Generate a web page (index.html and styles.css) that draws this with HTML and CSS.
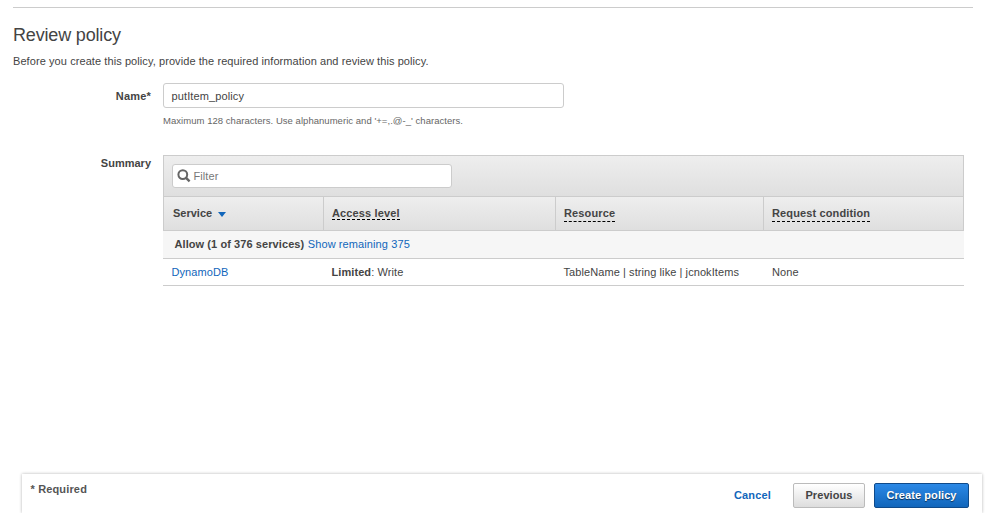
FILE: index.html
```html
<!DOCTYPE html>
<html lang="en">
<head>
<meta charset="utf-8">
<title>Review policy</title>
<link rel="stylesheet" href="styles.css">
</head>
<body>
<main class="page">
  <h1>Review policy</h1>
  <p class="intro">Before you create this policy, provide the required information and review this policy.</p>
  <div class="field name-field">
    <div class="label">Name*</div>
    <div>
      <div class="input">putItem_policy</div>
      <div class="hint">Maximum 128 characters. Use alphanumeric and '+=,.@-_' characters.</div>
    </div>
  </div>
  <div class="field summary-field">
    <div class="label">Summary</div>
    <section class="summary">
      <div class="toolbar">
        <div class="filter">
          <svg width="14" height="14" viewBox="0 0 14 14"><circle cx="5.8" cy="5.6" r="4.4" fill="none" stroke="#666" stroke-width="2"/><path d="M8.8 8.6L12.6 12.4" stroke="#666" stroke-width="2.4"/></svg>
          <span>Filter</span>
        </div>
      </div>
      <div class="row head">
        <div class="cell">Service<i class="caret"></i></div>
        <div class="cell"><span class="tip">Access level</span></div>
        <div class="cell"><span class="tip tip-low">Resource</span></div>
        <div class="cell"><span class="tip tip-low">Request condition</span></div>
      </div>
      <div class="group"><b>Allow (1 of 376 services)</b><a>Show remaining 375</a></div>
      <div class="row data">
        <div class="cell"><a>DynamoDB</a></div>
        <div class="cell"><b>Limited</b>: Write</div>
        <div class="cell">TableName | string like | jcnokItems</div>
        <div class="cell">None</div>
      </div>
    </section>
  </div>
</main>
<footer class="footer">
  <div class="required">* Required</div>
  <div class="actions">
    <a class="cancel">Cancel</a>
    <div class="button previous">Previous</div>
    <div class="button create">Create policy</div>
  </div>
</footer>
</body>
</html>
```
FILE: styles.css
```css
* { box-sizing: border-box; }
body {
  margin: 0;
  height: 513px;
  overflow: hidden;
  display: flex;
  flex-direction: column;
  background: #fff;
  color: #444;
  font: 11px/14px "Liberation Sans", Arial, sans-serif;
  letter-spacing: .08px;
  white-space: nowrap;
}
a { color: #1166bb; }
.page {
  flex: 1;
  width: 960px;
  margin: 7px 0 0 13px;
  border-top: 1px solid #ccc;
}
h1 { margin: 16px 0 0; font-size: 18px; line-height: 22px; font-weight: 400; letter-spacing: -.17px; }
.intro { margin: 8px 0 0; }
.field { display: grid; grid-template-columns: 138px 801px; column-gap: 12px; }
.label { padding-top: 1px; text-align: right; font-weight: 700; letter-spacing: 0; }
.name-field { margin-top: 15px; }
.name-field .label { padding-top: 6px; letter-spacing: .2px; }
.input {
  width: 401px;
  height: 25px;
  border: 1px solid #ccc;
  border-radius: 3px;
  padding: 5px 7.5px;
  letter-spacing: .12px;
}
.hint { margin-top: 6px; font-size: 9.5px; letter-spacing: .04px; color: #666; }
.summary-field { margin-top: 27px; }
.toolbar {
  height: 41px;
  padding: 8px;
  border: 1px solid #ccc;
  border-bottom: 0;
  background: linear-gradient(#eee, #dfdfdf);
}
.filter {
  display: flex;
  align-items: center;
  width: 280px;
  height: 24px;
  padding: 0 4px;
  gap: 2.5px;
  border: 1px solid #ccc;
  border-radius: 3px;
  background: #fff;
  color: #777;
}
.row { display: grid; grid-template-columns: 160px 232px 208px 201px; }
.head {
  height: 35px;
  border: 1px solid #ccc;
  grid-template-columns: 159px 232px 208px 200px;
  background: linear-gradient(#eee, #dfdfdf);
  font-weight: 700;
  letter-spacing: .13px;
}
.head .cell { padding: 9px 0 0 8px; border-left: 1px solid #ccc; }
.head .cell:first-child { border-left: 0; padding-left: 9px; letter-spacing: 0; }
.tip { display: inline-block; height: 14px; border-bottom: 1px dashed #000; }
.tip-low { height: 16px; }
.caret {
  display: inline-block;
  margin-left: 6px;
  vertical-align: 0;
  border: 4.5px solid transparent;
  border-top: 5px solid #1166bb;
  border-bottom: 0;
}
.group { height: 28px; padding: 6px 0 0 11.5px; background: #f6f6f6; border-bottom: 1px solid #ccc; }
.group a { margin-left: 3.5px; letter-spacing: .1px; }
.data { height: 27px; border-bottom: 1px solid #ccc; }
.data .cell { padding: 6px 0 0 8.5px; }
.data .cell:nth-child(4) { padding-left: 9px; }
.footer {
  display: flex;
  justify-content: space-between;
  width: 960px;
  height: 39px;
  margin-left: 22px;
  padding: 0 13px 0 8.5px;
  box-shadow: 0 0 3px rgba(0, 0, 0, .3);
}
.required { padding-top: 8px; font-weight: 700; letter-spacing: .15px; color: #555; }
.actions { display: flex; padding-top: 9px; font-weight: 700; }
.cancel { width: 59px; padding-top: 5px; letter-spacing: .15px; }
.button { height: 25px; padding-top: 4px; border: 1px solid #bbb; border-radius: 2px; text-align: center; }
.previous { width: 72px; background: linear-gradient(#fff, #ddd); }
.create {
  width: 95px;
  margin-left: 9px;
  border-color: #0f4a8a;
  background: linear-gradient(#2b88e6, #1166bb);
  color: #fff;
  text-shadow: 0 1px 1px rgba(0, 0, 0, .6);
}
```
